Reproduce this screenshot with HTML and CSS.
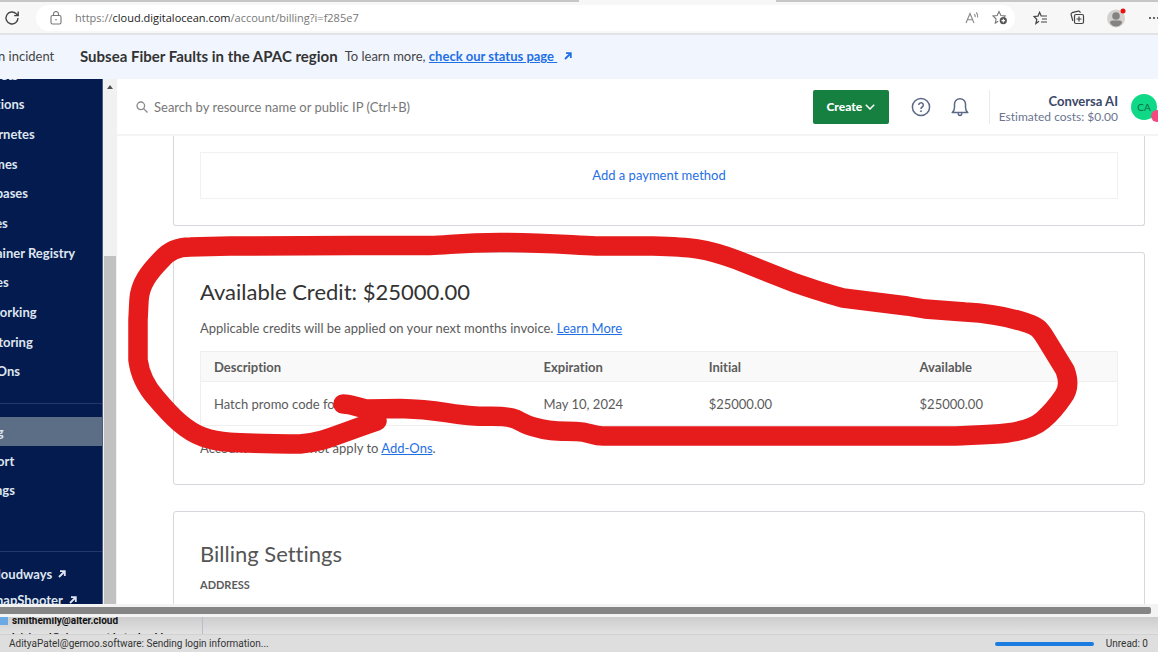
FILE: index.html
```html
<!DOCTYPE html>
<html lang="en">
<head>
    <meta charset="utf-8">
    <title>Billing - DigitalOcean</title>
    <link rel="stylesheet" href="styles.css">
</head>
<body>
    <div class="tab-strip"><span></span><span></span></div>

    <!-- Browser toolbar -->
    <div class="toolbar">
        <button class="tool reload" aria-label="Refresh">
            <svg width="16" height="16" viewBox="0 0 16 16" fill="none" stroke="#444" stroke-width="1.4"><path d="M14 8a6 6 0 1 1-1.8-4.3L14 5.5M14.2 1.6v4h-4"/></svg>
        </button>
        <div class="address">
            <svg width="12" height="14" viewBox="0 0 12 14" fill="none" stroke="#777" stroke-width="1.1"><rect x="1" y="4.5" width="10" height="8.5" rx="1.5"/><path d="M3.5 4.5V3a2.5 2.5 0 0 1 5 0v1.5"/><circle cx="6" cy="8.8" r=".8" fill="#777" stroke="none"/></svg>
            <span class="url">https://<b>cloud.digitalocean.com</b>/account/billing?i=f285e7</span>
            <button class="tool" aria-label="Read aloud">
                <svg width="15" height="14" viewBox="0 0 15 14" fill="none" stroke="#888" stroke-width="1.1"><path d="M1 12 5 2.5 9 12M2.4 8.8h5.2M9.3 3.2q1.2 1.2.9 3M11.3 1.5q2 2 1.4 5"/></svg>
            </button>
            <button class="tool" aria-label="Add to favorites">
                <svg width="16" height="15" viewBox="0 0 16 15" fill="none" stroke="#777" stroke-width="1.1"><path d="M6.2 11.2 3.3 13l.8-4L1 6l4.2-.5L7 1.5l1.9 4 4.2.5-1 1"/><circle cx="11.3" cy="10.6" r="3.6" fill="#555" stroke="none"/><path d="M11.3 8.8v3.6M9.5 10.6h3.6" stroke="#fff"/></svg>
            </button>
        </div>
        <button class="tool" aria-label="Favorites">
            <svg width="15" height="14" viewBox="0 0 15 14" fill="none" stroke="#444" stroke-width="1.2"><path d="M6 10.2 2.9 12.5l.9-4L1 5.5l4-.4L6.6 1.3 8.2 5H14M9 8h5M8 11h6"/></svg>
        </button>
        <button class="tool" aria-label="Collections">
            <svg width="15" height="15" viewBox="0 0 15 15" fill="none" stroke="#444" stroke-width="1.2"><rect x="4.5" y="4.5" width="9" height="9" rx="1.5"/><path d="M9 6.5v5M6.5 9h5M2.8 10.8 1.1 4.5a1.5 1.5 0 0 1 1-1.8l6.2-1.6a1.5 1.5 0 0 1 1.8 1l.2.8"/></svg>
        </button>
        <button class="tool" aria-label="Profile">
            <svg width="20" height="20" viewBox="0 0 20 20"><circle cx="9" cy="10.5" r="9" fill="#d3d0cd"/><circle cx="9" cy="8" r="3.8" fill="#858381"/><path d="M3 15q0-2.5 2.5-2.5h7q2.5 0 2.5 2.5-2.5 3.5-6 3.5t-6-3.5z" fill="#858381"/><circle cx="16" cy="3" r="2.5" fill="#e81010"/></svg>
        </button>
        <button class="tool" aria-label="More">
            <svg width="12" height="4" viewBox="0 0 12 4" fill="#444"><circle cx="2" cy="2" r="1.1"/><circle cx="6" cy="2" r="1.1"/><circle cx="10" cy="2" r="1.1"/></svg>
        </button>
    </div>

    <!-- Incident banner -->
    <div class="banner">
        <span class="incident">n incident</span>
        <strong>Subsea Fiber Faults in the APAC region</strong>
        <span>To learn more, <a href="#">check our status page&nbsp;</a></span>
        <svg class="arrow" width="8" height="8" viewBox="0 0 8 8" fill="none" stroke="currentColor" stroke-width="1.8"><path d="M1 7l5.5-5.5M2 1.2h4.800V6"/></svg>
    </div>

    <div class="app">
        <nav class="sidebar">
            <ul class="resources">
                <li><a href="#">Droplets</a></li>
                <li><a href="#">Functions</a></li>
                <li><a href="#">Kubernetes</a></li>
                <li><a href="#">Volumes</a></li>
                <li><a href="#">Databases</a></li>
                <li><a href="#">Spaces</a></li>
                <li><a href="#">Container Registry</a></li>
                <li><a href="#">Images</a></li>
                <li><a href="#">Networking</a></li>
                <li><a href="#">Monitoring</a></li>
                <li><a href="#">Add-Ons</a></li>
            </ul>
            <ul class="account">
                <li class="active"><a href="#">Billing</a></li>
                <li><a href="#">Support</a></li>
                <li><a href="#">Settings</a></li>
            </ul>
            <ul class="partners">
                <li><a href="#">Cloudways <svg width="8" height="8" viewBox="0 0 8 8" fill="none" stroke="currentColor" stroke-width="1.8"><path d="M1 7l5.5-5.5M2 1.2h4.800V6"/></svg></a></li>
                <li><a href="#">SnapShooter <svg width="8" height="8" viewBox="0 0 8 8" fill="none" stroke="currentColor" stroke-width="1.8"><path d="M1 7l5.5-5.5M2 1.2h4.800V6"/></svg></a></li>
            </ul>
        </nav>
        <div class="scroll-track">
            <svg width="6" height="4" viewBox="0 0 6 4"><path d="M0 4 3 0l3 4z" fill="#505050"/></svg>
            <div class="scroll-thumb"></div>
        </div>

        <main>
            <header class="topbar">
                <label class="search">
                    <svg width="12" height="12" viewBox="0 0 12 12" fill="none" stroke="#8a8a8a" stroke-width="1.3"><circle cx="4.8" cy="4.8" r="3.8"/><path d="M7.6 7.6 11.5 11.5"/></svg>
                    <input type="text" aria-label="Search" placeholder="Search by resource name or public IP (Ctrl+B)">
                </label>
                <button class="create">Create
                    <svg width="10" height="6" viewBox="0 0 10 6" fill="none" stroke="#fff" stroke-width="1.5"><path d="M.8.8 5 5 9.2.8"/></svg>
                </button>
                <button class="icon-btn" aria-label="Help">
                    <svg width="20" height="20" viewBox="0 0 20 20" fill="none" stroke="#5b6987" stroke-width="1.5"><circle cx="10" cy="10" r="8.6"/><path d="M7.7 8a2.3 2.3 0 1 1 3.5 2q-1.2.7-1.2 1.9"/><circle cx="10" cy="14.2" r=".6" fill="#5b6987" stroke-width=".8"/></svg>
                </button>
                <button class="icon-btn" aria-label="Notifications">
                    <svg width="20" height="20" viewBox="0 0 20 20" fill="none" stroke="#5b6987" stroke-width="1.5" stroke-linejoin="round"><path d="M2.2 15.5q2.3-2 2.3-5V7.2a5.5 5.5 0 0 1 11 0v3.3q0 3 2.3 5zM8 16.5q.4 2 2 2t2-2"/></svg>
                </button>
                <div class="team">
                    <strong>Conversa AI</strong>
                    <span>Estimated costs: $0.00</span>
                </div>
                <div class="avatar">CA<i></i></div>
            </header>

            <section class="card payment">
                <div class="method"><a href="#">Add a payment method</a></div>
            </section>

            <section class="card credit">
                <h2>Available Credit: $25000.00</h2>
                <p>Applicable credits will be applied on your next months invoice. <a href="#">Learn More</a></p>
                <table>
                    <thead>
                        <tr><th class="desc">Description</th><th class="exp">Expiration</th><th class="amount">Initial</th><th class="amount">Available</th></tr>
                    </thead>
                    <tbody>
                        <tr><td>Hatch promo code for</td><td>May 10, 2024</td><td>$25000.00</td><td>$25000.00</td></tr>
                    </tbody>
                </table>
                <p>Account credits do not apply to <a href="#">Add-Ons</a>.</p>
            </section>

            <section class="card settings">
                <h2>Billing Settings</h2>
                <h3>Address</h3>
            </section>
        </main>
    </div>

    <div class="hscroll"><div></div></div>

    <!-- Mail window behind the browser -->
    <div class="mail">
        <ul>
            <li><i></i>smithemily@alter.cloud</li>
            <li><i></i>b.jaiswal@sipconcept.batechnobl</li>
        </ul>
    </div>
    <footer class="status">
        <span>AdityaPatel@gemoo.software: Sending login information...</span>
        <div class="progress"></div>
        <span>Unread: 0</span>
    </footer>

    <!-- Hand-drawn marker loop -->
    <svg class="marker" width="1158" height="652" viewBox="0 0 1158 652" fill="none" stroke="#e61c1c" stroke-width="19.5" stroke-linecap="round" stroke-linejoin="round">
        <path d="M343 404C352 404 359 408 368 409L400 408.5C440 409 445 414 475 416C488 417 500 415 512 418C520 420 524 425 534 427C550 432 560 431 575 431.5C588 431 592 436 603 436H955C975 435 990 435 1007 433C1023 431 1035 427 1043 420C1052 412 1057 406 1063 397C1070 388 1068 378 1065 370L1046 339C1040 329 1037 326 1027 323C1003 315 985 313 965 312L925 309L907 306L843 298C827 294 810 288 795 283L737 260C705 248 690 247 653 246H596C570 245 545 242.5 500 242.5C460 242.5 450 245 430 245.5H353L230 246L190 247C177 247 169 251 162 259C149 272 140 284 139 300L138 320V360C140 375 147 388 156 398C172 417 186 431 203 437C222 444 240 443 300 444C325 442 335 435 377 421"/>
    </svg>
</body>
</html>
```

FILE: styles.css
```css
* {
    box-sizing: border-box;
}
body {
    margin: 0;
    height: 100vh;
    display: flex;
    flex-direction: column;
    overflow: hidden;
    position: relative;
    font-family: Lato, "Liberation Sans", sans-serif;
    font-size: 13px;
    font-variant-ligatures: none;
    color: #5b5b5b;
    background: #fff;
}
ul {
    list-style: none;
    margin: 0;
    padding: 0;
}
a {
    color: #1f6fe5;
}
button {
    border: none;
    background: none;
    padding: 0;
    font-family: inherit;
    cursor: pointer;
}
svg {
    display: block;
}

/* browser chrome */
.tab-strip {
    flex: none;
    display: flex;
    justify-content: space-between;
    height: 2px;
    background: #f7f7f7;
}
.tab-strip span {
    width: 50%;
    background: #c6c6c6;
}
.tab-strip span:last-child {
    width: 33%;
}
.toolbar {
    flex: none;
    display: flex;
    align-items: center;
    gap: 22px;
    height: 33px;
    padding-left: 4px;
    background: #f7f7f7;
    border-bottom: 2px solid #e1e3e8;
    overflow: hidden;
}
.tool {
    flex: none;
}
.toolbar .tool:last-child {
    margin: 0 -2px 0 -1px;
}
.reload {
    margin-right: -6px;
}
.address {
    flex: 1;
    display: flex;
    align-items: center;
    gap: 13px;
    height: 26px;
    margin-right: -4px;
    padding: 0 9px 0 14px;
    border-radius: 13px;
    background: #fff;
}
.url {
    flex: 1;
    font-family: "Open Sans", "Noto Sans", sans-serif;
    font-size: 11px;
    color: #777;
}
.url b {
    font-weight: normal;
    color: #222;
}

.banner {
    flex: none;
    display: flex;
    align-items: center;
    gap: 7px;
    height: 44px;
    padding-bottom: 2px;
    background: #f1f6fe;
    color: #444;
    white-space: nowrap;
}
.banner .incident {
    width: 75px;
    margin-left: -2px;
}
.banner strong {
    font-size: 15px;
    color: #333;
}
.banner a {
    font-weight: bold;
}
.banner .arrow {
    color: #1f6fe5;
}

/* control panel */
.app {
    flex: 1;
    display: flex;
    min-height: 0;
}
.sidebar {
    flex: none;
    width: 103px;
    overflow: hidden;
    background: #031b4e;
    border-right: 1px solid #4c5c82;
    font-weight: bold;
    white-space: nowrap;
}
.sidebar ul {
    display: grid;
    grid-auto-rows: 1fr;
}
.sidebar li {
    display: flex;
    align-items: center;
}
.sidebar a {
    display: flex;
    align-items: center;
    gap: 6px;
    margin-left: -32px;
    color: #dfe5f0;
    text-decoration: none;
}
.sidebar .resources {
    height: 326px;
    margin-top: -19px;
}
.sidebar .account {
    height: 148px;
    margin-top: 17px;
    padding: 13px 0 46px;
    border-top: 1px solid #24396a;
}
.sidebar .active {
    background: #5b6e85;
}
.sidebar .partners {
    height: 62px;
    padding-top: 9px;
    border-top: 1px solid #24396a;
}
.sidebar .partners a {
    margin-left: -11px;
}
.scroll-track {
    flex: none;
    display: flex;
    flex-direction: column;
    align-items: center;
    justify-content: space-between;
    width: 14px;
    padding-top: 6px;
    background: #f1f1f1;
}
.scroll-thumb {
    width: 12px;
    height: 67%;
    background: #c1c1c1;
}
main {
    flex: 1;
    min-width: 0;
    overflow: hidden;
}
.topbar {
    display: flex;
    align-items: center;
    height: 57px;
    padding-left: 19px;
    border-bottom: 2px solid #f3f4f6;
}
.search {
    flex: 1;
    display: flex;
    align-items: center;
    gap: 6px;
}
.search input {
    flex: 1;
    padding: 0;
    border: none;
    outline: none;
    font: inherit;
}
.search input::placeholder {
    color: #777;
}
.create {
    display: flex;
    align-items: center;
    justify-content: center;
    gap: 3px;
    width: 76px;
    height: 34px;
    margin-right: 22px;
    border-radius: 2px;
    background: #15803f;
    color: #fff;
    font-size: 12px;
    font-weight: 900;
}
.icon-btn {
    margin-right: 19px;
}
.team {
    display: flex;
    flex-direction: column;
    align-items: flex-end;
    height: 34px;
    padding: 3px 0 0 9px;
    border-left: 1px solid #e8eaee;
    font-size: 12px;
    line-height: 16px;
    color: #6b7590;
}
.team strong {
    font-size: 13px;
    color: #3b4868;
}
.avatar {
    position: relative;
    flex: none;
    width: 26px;
    height: 26px;
    margin: 0 1px 0 13px;
    border-radius: 50%;
    background: #0fd987;
    color: #0b6b4a;
    font-size: 10px;
    line-height: 26px;
    text-align: center;
}
.avatar i {
    position: absolute;
    right: -6px;
    bottom: -2px;
    width: 12px;
    height: 12px;
    border-radius: 50%;
    background: #f5487f;
}

.card {
    margin: 0 13px 26px 56px;
    padding: 25px 26px;
    border: 1px solid #d5d8dc;
    border-radius: 3px;
}
.payment {
    padding: 16px 26px 26px;
    border-top: none;
    border-top-left-radius: 0;
    border-top-right-radius: 0;
}
.method {
    padding: 13px 13px 14px;
    border: 1px solid #f1f1f1;
    line-height: 18px;
    text-align: center;
}
.method a {
    text-decoration: none;
}
.card h2 {
    margin: 0;
    font-size: 22px;
    font-weight: normal;
    line-height: 28px;
    color: #333;
}
.card p {
    margin: 13px 0 14px;
    line-height: 18px;
}
.card p:last-child {
    margin-bottom: 2px;
}
.card table {
    width: 100%;
    table-layout: fixed;
    border: 1px solid #efefef;
    border-collapse: collapse;
    text-align: left;
}
.card th,
.card td {
    padding: 0 13px;
}
.card th {
    height: 30px;
    background: #f9f9f9;
    border-bottom: 1px solid #efefef;
}
.card td {
    height: 44px;
}
.desc {
    width: 36%;
}
.exp {
    width: 18%;
}
.amount {
    width: 23%;
}
.settings h2 {
    margin: 3px 0 8px;
    color: #555;
}
.card h3 {
    margin: 0;
    font-size: 11px;
    line-height: 18px;
    text-transform: uppercase;
}

/* bottom of the screen */
.hscroll {
    flex: none;
    height: 13px;
    padding: 3px 7px 3px 0;
    background: #f3f3f3;
}
.hscroll div {
    height: 7px;
    border-radius: 0 2px 2px 0;
    background: #858585;
}
.mail {
    flex: none;
    height: 17px;
    overflow: hidden;
    background: linear-gradient(#cdcdcd, #e2e2e2);
}
.mail ul {
    width: 203px;
    height: 22px;
    margin-top: -5px;
    border-right: 1px solid #b9bdc9;
    font: bold 10px/17px Roboto, sans-serif;
    color: #111;
}
.mail li {
    display: flex;
    align-items: center;
    gap: 4px;
}
.mail i {
    width: 8px;
    height: 8px;
    background: #6aa9e4;
}
.status {
    flex: none;
    display: flex;
    align-items: center;
    gap: 12px;
    height: 18px;
    padding: 0 10px 0 9px;
    background: #dedede;
    border-top: 1px solid #d2d2d2;
    font-family: Roboto, sans-serif;
    font-size: 10px;
    color: #333;
}
.progress {
    width: 99px;
    height: 4px;
    margin-left: auto;
    border-radius: 2px;
    background: #1a7ce0;
}
.marker {
    position: absolute;
    left: 0;
    top: 0;
    pointer-events: none;
}
```
